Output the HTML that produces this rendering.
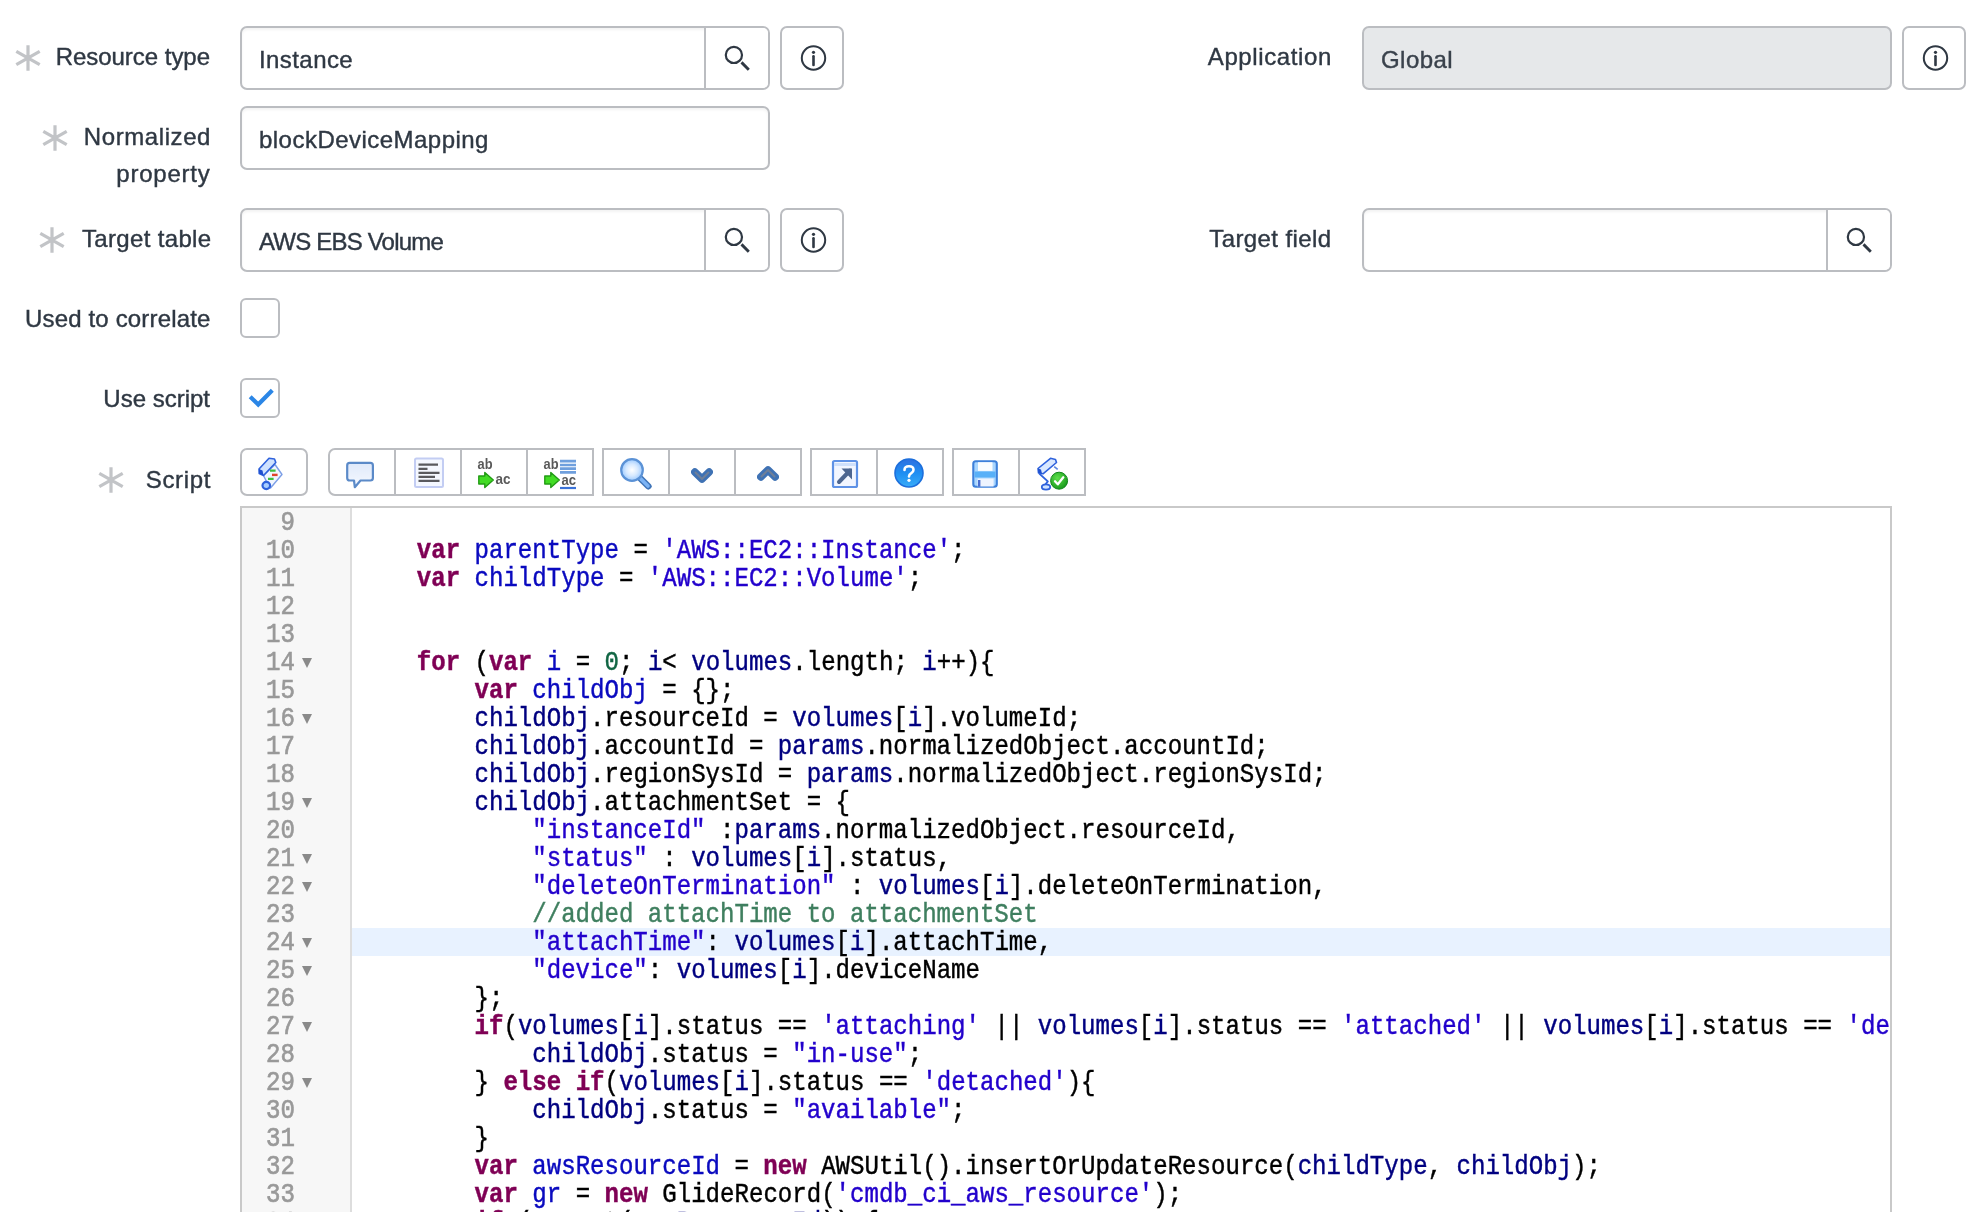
<!DOCTYPE html>
<html>
<head>
<meta charset="utf-8">
<title>Form</title>
<style>
html,body{margin:0;padding:0;}
body{width:1976px;height:1212px;overflow:hidden;background:#fff;position:relative;font-family:"Liberation Sans",sans-serif;color:#2e3d49;}
.lbl{position:absolute;font-size:24px;line-height:30px;white-space:nowrap;text-align:right;color:#2f3843;letter-spacing:-0.2px;-webkit-text-stroke:0.4px #2f3843;}
.ast{position:absolute;width:26px;height:26px;}
.inp{position:absolute;box-sizing:border-box;height:64px;border:2px solid #bbbdc1;border-radius:7px;background:#fff;box-shadow:inset 0 2px 3px rgba(0,0,0,0.05);}
.inp.ro{background:#e6e8ea;box-shadow:none;}
.inp.ro .txt{color:#3a424c;-webkit-text-stroke:0.4px #3a424c;}
.inp .txt{position:absolute;left:17px;top:17px;font-size:24px;line-height:30px;white-space:nowrap;color:#2f3843;letter-spacing:-0.15px;-webkit-text-stroke:0.4px #2f3843;}
.inp .div{position:absolute;top:0;bottom:0;width:2px;background:#bbbdc1;}
.inp .sb{position:absolute;top:0;bottom:0;right:0;width:62px;background:#fff;border-radius:0 5px 5px 0;}
.ibtn{position:absolute;box-sizing:border-box;width:64px;height:64px;border:2px solid #bbbdc1;border-radius:7px;background:#fff;}
.chk{position:absolute;box-sizing:border-box;width:40px;height:40px;border:2px solid #bbbdc1;border-radius:6px;background:#fff;}
svg{position:absolute;overflow:visible;}
.tg{position:absolute;top:448px;height:48px;box-sizing:border-box;border:2px solid #bbbdc1;background:#fff;}
.tg .d{position:absolute;top:0;bottom:0;width:2px;background:#bbbdc1;}

.ed{position:absolute;left:240px;top:506px;width:1652px;height:720px;box-sizing:border-box;border:2px solid #c9c9c9;background:#fff;overflow:hidden;font-family:"Liberation Mono",monospace;font-size:24.078px;}
.gut{position:absolute;left:0;top:0;bottom:0;width:108px;background:#f7f7f7;border-right:2px solid #dddddd;}
.al{position:absolute;left:110px;right:0;top:420px;height:28px;background:#e8f2ff;}
.ln{position:absolute;left:0;width:53px;height:28px;line-height:28px;margin-top:2px;text-align:right;color:#999;white-space:pre;transform:scaleY(1.11);transform-origin:0 20px;-webkit-text-stroke:0.6px #999;}
.fd{position:absolute;left:60.200px;width:0;height:0;margin-top:10px;border-left:5.200px solid transparent;border-right:5.200px solid transparent;border-top:10.500px solid #8a8a8a;}
.cl{position:absolute;left:117px;margin:2px 0 0 0;height:28px;line-height:28px;white-space:pre;color:#000;transform:scaleY(1.11);transform-origin:0 20px;-webkit-text-stroke:0.4px;font-family:"Liberation Mono",monospace;font-size:24.078px;}
.k{color:#7f0055;font-weight:bold;}
.v{color:#000080;}
.d{color:#0a0abf;}
.s{color:#2200cc;}
.n{color:#116644;}
.c{color:#3f7f5f;}
.ic{position:absolute;top:7px;width:32px;height:32px;filter:blur(0.55px);}

</style>
</head>
<body>
<div id="wrap" style="position:absolute;left:0;top:0;width:1976px;height:1212px;will-change:transform;">

<!-- labels left -->
<svg class="ast" style="left:15px;top:45px" viewBox="0 0 26 26"><g stroke="#c2c4c7" stroke-width="3.2" fill="none"><path d="M13 0.300V25.700M1.300 6.300L24.700 19.700M24.700 6.300L1.300 19.700"/></g></svg>
<div class="lbl" style="letter-spacing:-0.03px;right:1766px;top:42px">Resource type</div>

<svg class="ast" style="left:42px;top:125px" viewBox="0 0 26 26"><g stroke="#c2c4c7" stroke-width="3.2" fill="none"><path d="M13 0.300V25.700M1.300 6.300L24.700 19.700M24.700 6.300L1.300 19.700"/></g></svg>
<div class="lbl" style="letter-spacing:0.58px;right:1765px;top:122px">Normalized</div>
<div class="lbl" style="letter-spacing:0.77px;right:1765.500px;top:159px">property</div>

<svg class="ast" style="left:39px;top:227px" viewBox="0 0 26 26"><g stroke="#c2c4c7" stroke-width="3.2" fill="none"><path d="M13 0.300V25.700M1.300 6.300L24.700 19.700M24.700 6.300L1.300 19.700"/></g></svg>
<div class="lbl" style="letter-spacing:0.35px;right:1764.500px;top:224px">Target table</div>

<div class="lbl" style="letter-spacing:0.16px;right:1765.500px;top:304px">Used to correlate</div>
<div class="lbl" style="letter-spacing:0.0px;right:1766px;top:384px">Use script</div>

<svg class="ast" style="left:98px;top:467px" viewBox="0 0 26 26"><g stroke="#c2c4c7" stroke-width="3.2" fill="none"><path d="M13 0.300V25.700M1.300 6.300L24.700 19.700M24.700 6.300L1.300 19.700"/></g></svg>
<div class="lbl" style="letter-spacing:0.64px;right:1765px;top:465px">Script</div>

<!-- labels right -->
<div class="lbl" style="letter-spacing:0.62px;right:644px;top:42px">Application</div>
<div class="lbl" style="letter-spacing:0.4px;right:644.500px;top:224px">Target field</div>

<!-- row 1 -->
<div class="inp" style="left:240px;top:26px;width:530px">
  <div class="txt" style="letter-spacing:0.42px;">Instance</div>
  <div class="sb"></div><div class="div" style="left:462px"></div>
  <svg style="left:478px;top:14px" width="36" height="36" viewBox="0 0 36 36"><circle cx="13.900" cy="12.900" r="8.100" fill="none" stroke="#2f3843" stroke-width="2.200"/><path d="M21.500 20.400L28.800 27.700" stroke="#2f3843" stroke-width="2.900" fill="none"/></svg>
</div>
<div class="ibtn" style="left:780px;top:26px">
  <svg style="left:17px;top:17px" width="30" height="30" viewBox="0 0 30 30"><circle cx="14.5" cy="13" r="11.7" fill="none" stroke="#2f3843" stroke-width="2"/><circle cx="14.5" cy="7.3" r="1.6" fill="#2f3843"/><path d="M14.5 11.3V20" stroke="#2f3843" stroke-width="2.6" stroke-linecap="round"/></svg>
</div>

<div class="inp ro" style="left:1362px;top:26px;width:530px">
  <div class="txt" style="letter-spacing:0.45px;">Global</div>
</div>
<div class="ibtn" style="left:1902px;top:26px">
  <svg style="left:17px;top:17px" width="30" height="30" viewBox="0 0 30 30"><circle cx="14.5" cy="13" r="11.7" fill="none" stroke="#2f3843" stroke-width="2"/><circle cx="14.5" cy="7.3" r="1.6" fill="#2f3843"/><path d="M14.5 11.3V20" stroke="#2f3843" stroke-width="2.6" stroke-linecap="round"/></svg>
</div>

<!-- row 2 -->
<div class="inp" style="left:240px;top:106px;width:530px">
  <div class="txt" style="letter-spacing:0.47px;">blockDeviceMapping</div>
</div>

<!-- row 3 -->
<div class="inp" style="left:240px;top:208px;width:530px">
  <div class="txt" style="letter-spacing:-0.8px;">AWS EBS Volume</div>
  <div class="sb"></div><div class="div" style="left:462px"></div>
  <svg style="left:478px;top:14px" width="36" height="36" viewBox="0 0 36 36"><circle cx="13.900" cy="12.900" r="8.100" fill="none" stroke="#2f3843" stroke-width="2.200"/><path d="M21.500 20.400L28.800 27.700" stroke="#2f3843" stroke-width="2.900" fill="none"/></svg>
</div>
<div class="ibtn" style="left:780px;top:208px">
  <svg style="left:17px;top:17px" width="30" height="30" viewBox="0 0 30 30"><circle cx="14.5" cy="13" r="11.7" fill="none" stroke="#2f3843" stroke-width="2"/><circle cx="14.5" cy="7.3" r="1.6" fill="#2f3843"/><path d="M14.5 11.3V20" stroke="#2f3843" stroke-width="2.6" stroke-linecap="round"/></svg>
</div>
<div class="inp" style="left:1362px;top:208px;width:530px">
  <div class="sb"></div><div class="div" style="left:462px"></div>
  <svg style="left:478px;top:14px" width="36" height="36" viewBox="0 0 36 36"><circle cx="13.900" cy="12.900" r="8.100" fill="none" stroke="#2f3843" stroke-width="2.200"/><path d="M21.500 20.400L28.800 27.700" stroke="#2f3843" stroke-width="2.900" fill="none"/></svg>
</div>

<!-- checkboxes -->
<div class="chk" style="left:240px;top:298px"></div>
<div class="chk" style="left:240px;top:378px">
  <svg style="left:4px;top:6px" width="28" height="24" viewBox="0 0 28 24"><path d="M4.200 10.800L12.200 18.500L26.300 4.200" fill="none" stroke="#2b86e6" stroke-width="4.200"/></svg>
</div>

<!--TOOLBAR-->
<div class="tg" style="left:240px;width:68px;border-radius:7px"><svg class="ic" style="left:16px" viewBox="0 0 32 32">
<path d="M5.500 18.500L17 7.500L24 17.500L12.500 31L8.500 24.500Z" fill="#f1f6ff" stroke="#7d9fe6" stroke-width="1.400" stroke-linejoin="round"/>
<path d="M11 1.300L16.500 2L17.800 5.500L5.500 18.500L1.200 16.500L1 12Z" fill="#cfe2ff" stroke="#2f62dc" stroke-width="1.600" stroke-linejoin="round"/>
<path d="M1 12L1.200 16.500L5.500 18.500L4.500 13.500Z" fill="#1f4fd0"/>
<ellipse cx="8.300" cy="28.500" rx="3.800" ry="3.600" fill="#a9ceff" stroke="#2f62dc" stroke-width="2.200"/>
<path d="M12 13.700H17.600M10 21.800H15.600" stroke="#3fc03f" stroke-width="2.200"/>
<path d="M14 17.900H19.600" stroke="#e0452a" stroke-width="2.400"/>
</svg></div>
<div class="tg" style="left:328px;width:266px;border-radius:7px 0 0 7px"><div class="d" style="left:64px"></div><div class="d" style="left:130px"></div><div class="d" style="left:196px"></div><svg class="ic" style="left:16px" viewBox="0 0 32 32">
<defs><linearGradient id="gb" x1="0" y1="0" x2="0" y2="1"><stop offset="0" stop-color="#dfe9fa"/><stop offset="1" stop-color="#f6f9ff"/></linearGradient></defs>
<path d="M3.700 5.900H24.400Q26.900 5.900 26.900 8.400V21Q26.900 23.500 24.400 23.500H14.500L8.800 30.200L8 23.500H3.700Q1.200 23.500 1.200 21V8.400Q1.200 5.900 3.700 5.900Z" fill="url(#gb)" stroke="#5b8ac8" stroke-width="2.2" stroke-linejoin="round"/>
</svg><svg class="ic" style="left:82px" viewBox="0 0 32 32">
<rect x="3" y="1.500" width="28" height="28.500" rx="1.500" fill="#f5f8ff" stroke="#c3cdf3" stroke-width="2"/>
<path d="M6.500 7.700H26M6.500 11.800H15.500M6.500 15.800H27.500M6.500 19.900H23M6.500 23.900H27.500" stroke="#5a5a5e" stroke-width="2.300"/>
</svg><svg class="ic" style="left:148px" viewBox="0 0 32 32">
<text x="-0.500" y="12.300" font-family="Liberation Sans, sans-serif" font-weight="bold" font-size="15" fill="#5a5a5a" textLength="15" lengthAdjust="spacingAndGlyphs">ab</text>
<path d="M0.800 19h6v-3.500l8.500 7.500l-8.500 7.500v-3.500h-6z" fill="#42dc24" stroke="#229c14" stroke-width="1.400" stroke-linejoin="round"/>
<text x="17.500" y="27" font-family="Liberation Sans, sans-serif" font-weight="bold" font-size="15" fill="#5a5a5a" textLength="15" lengthAdjust="spacingAndGlyphs">ac</text>
</svg><svg class="ic" style="left:214px" viewBox="0 0 32 32">
<text x="-0.500" y="12.300" font-family="Liberation Sans, sans-serif" font-weight="bold" font-size="15" fill="#5a5a5a" textLength="15" lengthAdjust="spacingAndGlyphs">ab</text>
<path d="M16 4.200H32M16 8H32M16 11.600H32M16 15.300H32" stroke="#6f9fdd" stroke-width="2.700"/>
<path d="M16 31H32" stroke="#3a72d8" stroke-width="2.200"/>
<path d="M0.800 19h6v-3.500l8.500 7.500l-8.500 7.500v-3.500h-6z" fill="#42dc24" stroke="#229c14" stroke-width="1.400" stroke-linejoin="round"/>
<text x="17.500" y="27.500" font-family="Liberation Sans, sans-serif" font-weight="bold" font-size="15" fill="#5a5a5a" textLength="14.500" lengthAdjust="spacingAndGlyphs">ac</text>
</svg></div>
<div class="tg" style="left:602px;width:200px"><div class="d" style="left:64px"></div><div class="d" style="left:130px"></div><svg class="ic" style="left:16px" viewBox="0 0 32 32">
<defs><radialGradient id="gm" cx="0.5" cy="0.5" r="0.5"><stop offset="0" stop-color="#ffffff"/><stop offset="0.550" stop-color="#d6e9ff"/><stop offset="1" stop-color="#9ccaff"/></radialGradient></defs>
<path d="M20.500 21.500L28.300 29.300" stroke="#3f74b8" stroke-width="6.500" stroke-linecap="round"/>
<path d="M21 22L28 29" stroke="#7db4f5" stroke-width="3.600" stroke-linecap="round"/>
<circle cx="12" cy="13" r="10.800" fill="url(#gm)" stroke="#5b92d6" stroke-width="2.200"/>
</svg><svg class="ic" style="left:82px" viewBox="0 0 32 32">
<path d="M8.800 15L16 22L23.200 15" fill="none" stroke="#3f72b4" stroke-width="7.500" stroke-linecap="round" stroke-linejoin="round"/>
<path d="M9.500 15.500L16 22L22.500 15.500" fill="none" stroke="#6f7f98" stroke-width="2" stroke-linecap="round" stroke-linejoin="round"/>
</svg><svg class="ic" style="left:148px" viewBox="0 0 32 32">
<path d="M8.800 20L16 13L23.200 20" fill="none" stroke="#3f72b4" stroke-width="7.500" stroke-linecap="round" stroke-linejoin="round"/>
<path d="M9.500 19.500L16 13L22.500 19.500" fill="none" stroke="#6f7f98" stroke-width="2" stroke-linecap="round" stroke-linejoin="round"/>
</svg></div>
<div class="tg" style="left:810px;width:134px"><div class="d" style="left:64px"></div><svg class="ic" style="left:16px" viewBox="0 0 32 32">
<rect x="5" y="4" width="24" height="26" rx="1.500" fill="#f2f6ff" stroke="#5f92e6" stroke-width="2.200"/>
<path d="M6 7.500H28" stroke="#cfe0fb" stroke-width="3"/>
<path d="M11 25L22 13.500" stroke="#4d6690" stroke-width="4" stroke-linecap="round"/>
<path d="M13.500 11.500H24V22.500Z" fill="#4d6690"/>
</svg><svg class="ic" style="left:80px" viewBox="0 0 32 32">
<defs><linearGradient id="gh" x1="0" y1="0" x2="0" y2="1"><stop offset="0" stop-color="#2f6fe0"/><stop offset="0.500" stop-color="#1e8ef2"/><stop offset="1" stop-color="#38acf8"/></linearGradient></defs>
<circle cx="17" cy="16" r="14" fill="url(#gh)" stroke="#1d6fdc" stroke-width="1.600"/>
<path d="M12.500 13Q12.500 9.300 17 9.300Q21.500 9.300 21.500 12.700Q21.500 14.800 19.300 16.200Q17 17.500 17 19.500" fill="none" stroke="#fff" stroke-width="2.600" stroke-linecap="round"/>
<circle cx="17" cy="23.300" r="1.600" fill="#fff"/>
</svg></div>
<div class="tg" style="left:952px;width:134px"><div class="d" style="left:64px"></div><svg class="ic" style="left:16px" viewBox="0 0 32 32">
<defs><linearGradient id="gs" x1="0" y1="0" x2="0" y2="1"><stop offset="0" stop-color="#7db6ff"/><stop offset="1" stop-color="#bcd9ff"/></linearGradient></defs>
<rect x="3.300" y="4.200" width="23.500" height="25.600" rx="2.500" fill="#a9d6ff" stroke="#3d80da" stroke-width="2.100"/>
<rect x="8" y="5.200" width="14.500" height="8.700" fill="#fafdff"/>
<rect x="4.500" y="14.500" width="21.100" height="6" fill="#58b0f8"/>
<rect x="7.600" y="21.500" width="16" height="8" fill="#eef4ff"/>
<rect x="8" y="23" width="2.400" height="6.800" fill="#4a6fd0"/>
</svg><svg class="ic" style="left:82px" viewBox="0 0 32 32">
<defs><radialGradient id="gc" cx="0.4" cy="0.35" r="0.7"><stop offset="0" stop-color="#5fe04a"/><stop offset="1" stop-color="#14961a"/></radialGradient></defs>
<path d="M14.500 1.300L19.500 2.500L20.500 5.500L7 16.800L2.500 16L2 11.500Z" fill="#d9e8ff" stroke="#2f62dc" stroke-width="1.600" stroke-linejoin="round"/>
<path d="M2 11.500L2.500 16L6 16.800L5 12.500Z" fill="#1f4fd0"/>
<path d="M3.300 16.600L11.800 24.400L9 28" fill="none" stroke="#2f62dc" stroke-width="1.900" stroke-linejoin="round"/>
<path d="M18.200 9.600L21.700 12.400" fill="none" stroke="#5a84de" stroke-width="1.600"/>
<ellipse cx="10" cy="30" rx="4.200" ry="2.600" fill="#cfe2ff" stroke="#2f62dc" stroke-width="1.800"/>
<circle cx="23.100" cy="23.700" r="8.500" fill="url(#gc)" stroke="#11861a" stroke-width="1"/>
<path d="M19 24.300L21.800 27.300L27.300 20.300" fill="none" stroke="#fff" stroke-width="2.300" stroke-linecap="round" stroke-linejoin="round"/>
</svg></div>

<!--EDITOR-->
<div class="ed"><div class="gut"></div><div class="al"></div>
<div class="ln" style="top:0px">9</div>
<div class="ln" style="top:28px">10</div>
<pre class="cl" style="top:28px">    <span class="k">var</span> <span class="d">parentType</span> = <span class="s">'AWS::EC2::Instance'</span>;</pre>
<div class="ln" style="top:56px">11</div>
<pre class="cl" style="top:56px">    <span class="k">var</span> <span class="d">childType</span> = <span class="s">'AWS::EC2::Volume'</span>;</pre>
<div class="ln" style="top:84px">12</div>
<div class="ln" style="top:112px">13</div>
<div class="ln" style="top:140px">14</div>
<div class="fd" style="top:140px"></div>
<pre class="cl" style="top:140px">    <span class="k">for</span> (<span class="k">var</span> <span class="d">i</span> = <span class="n">0</span>; <span class="v">i</span>&lt; <span class="v">volumes</span>.length; <span class="v">i</span>++){</pre>
<div class="ln" style="top:168px">15</div>
<pre class="cl" style="top:168px">        <span class="k">var</span> <span class="d">childObj</span> = {};</pre>
<div class="ln" style="top:196px">16</div>
<div class="fd" style="top:196px"></div>
<pre class="cl" style="top:196px">        <span class="v">childObj</span>.resourceId = <span class="v">volumes</span>[<span class="v">i</span>].volumeId;</pre>
<div class="ln" style="top:224px">17</div>
<pre class="cl" style="top:224px">        <span class="v">childObj</span>.accountId = <span class="v">params</span>.normalizedObject.accountId;</pre>
<div class="ln" style="top:252px">18</div>
<pre class="cl" style="top:252px">        <span class="v">childObj</span>.regionSysId = <span class="v">params</span>.normalizedObject.regionSysId;</pre>
<div class="ln" style="top:280px">19</div>
<div class="fd" style="top:280px"></div>
<pre class="cl" style="top:280px">        <span class="v">childObj</span>.attachmentSet = {</pre>
<div class="ln" style="top:308px">20</div>
<pre class="cl" style="top:308px">            <span class="s">"instanceId"</span> :<span class="v">params</span>.normalizedObject.resourceId,</pre>
<div class="ln" style="top:336px">21</div>
<div class="fd" style="top:336px"></div>
<pre class="cl" style="top:336px">            <span class="s">"status"</span> : <span class="v">volumes</span>[<span class="v">i</span>].status,</pre>
<div class="ln" style="top:364px">22</div>
<div class="fd" style="top:364px"></div>
<pre class="cl" style="top:364px">            <span class="s">"deleteOnTermination"</span> : <span class="v">volumes</span>[<span class="v">i</span>].deleteOnTermination,</pre>
<div class="ln" style="top:392px">23</div>
<pre class="cl" style="top:392px">            <span class="c">//added attachTime to attachmentSet</span></pre>
<div class="ln" style="top:420px">24</div>
<div class="fd" style="top:420px"></div>
<pre class="cl" style="top:420px">            <span class="s">"attachTime"</span>: <span class="v">volumes</span>[<span class="v">i</span>].attachTime,</pre>
<div class="ln" style="top:448px">25</div>
<div class="fd" style="top:448px"></div>
<pre class="cl" style="top:448px">            <span class="s">"device"</span>: <span class="v">volumes</span>[<span class="v">i</span>].deviceName</pre>
<div class="ln" style="top:476px">26</div>
<pre class="cl" style="top:476px">        };</pre>
<div class="ln" style="top:504px">27</div>
<div class="fd" style="top:504px"></div>
<pre class="cl" style="top:504px">        <span class="k">if</span>(<span class="v">volumes</span>[<span class="v">i</span>].status == <span class="s">'attaching'</span> || <span class="v">volumes</span>[<span class="v">i</span>].status == <span class="s">'attached'</span> || <span class="v">volumes</span>[<span class="v">i</span>].status == <span class="s">'detaching'</span>){</pre>
<div class="ln" style="top:532px">28</div>
<pre class="cl" style="top:532px">            <span class="v">childObj</span>.status = <span class="s">"in-use"</span>;</pre>
<div class="ln" style="top:560px">29</div>
<div class="fd" style="top:560px"></div>
<pre class="cl" style="top:560px">        } <span class="k">else</span> <span class="k">if</span>(<span class="v">volumes</span>[<span class="v">i</span>].status == <span class="s">'detached'</span>){</pre>
<div class="ln" style="top:588px">30</div>
<pre class="cl" style="top:588px">            <span class="v">childObj</span>.status = <span class="s">"available"</span>;</pre>
<div class="ln" style="top:616px">31</div>
<pre class="cl" style="top:616px">        }</pre>
<div class="ln" style="top:644px">32</div>
<pre class="cl" style="top:644px">        <span class="k">var</span> <span class="d">awsResourceId</span> = <span class="k">new</span> AWSUtil().insertOrUpdateResource(<span class="v">childType</span>, <span class="v">childObj</span>);</pre>
<div class="ln" style="top:672px">33</div>
<pre class="cl" style="top:672px">        <span class="k">var</span> <span class="d">gr</span> = <span class="k">new</span> GlideRecord(<span class="s">'cmdb_ci_aws_resource'</span>);</pre>
<div class="ln" style="top:700px">34</div>
<div class="fd" style="top:700px"></div>
<pre class="cl" style="top:700px">        <span class="k">if</span> (<span class="v">gr</span>.get(<span class="v">awsResourceId</span>)) {</pre>
</div>

</div>
</body>
</html>
